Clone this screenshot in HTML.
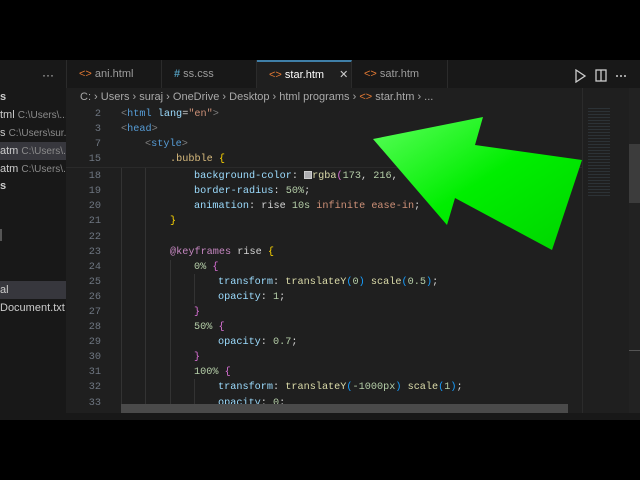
<!DOCTYPE html>
<html><head><meta charset="utf-8"><style>
*{margin:0;padding:0;box-sizing:border-box}
body{width:640px;height:480px;background:#000;overflow:hidden;position:relative;font-family:"Liberation Sans",sans-serif}
.a{position:absolute}
.ed{left:66px;top:88px;width:574px;height:325px;background:#1f1f1f}
.sb{left:0;top:60px;width:66px;height:353px;background:#181818}
.tabs{left:66px;top:60px;width:574px;height:28px;background:#181818}
.tab{position:absolute;top:60px;height:28px;border-right:1px solid #2b2b2b;color:#9d9d9d;font-size:11px;line-height:28px;padding-left:12px;white-space:nowrap}
.code{font-family:"Liberation Mono",monospace;font-size:10.2px;white-space:pre;line-height:15px;color:#d4d4d4}
.ln{position:absolute;left:70px;width:31px;text-align:right;color:#6e7681;font-family:"Liberation Mono",monospace;font-size:10.2px;line-height:15px}
.t{color:#808080}.tg{color:#569cd6}.at{color:#9cdcfe}.s{color:#ce9178}.sel{color:#d7ba7d}.p{color:#9cdcfe}.n{color:#b5cea8}.f{color:#dcdcaa}.k{color:#c586c0}.y{color:#ffd700}.m{color:#da70d6}.b{color:#179fff}
.si{position:absolute;left:0;width:66px;height:18px;font-size:11px;line-height:18px;color:#ccc;white-space:nowrap;overflow:hidden}
.si i{font-style:normal;color:#8b8b8b;font-size:10px}
.g{position:absolute;width:1px;background:#333}
</style></head><body>
<div class="a sb"></div>
<div class="a" style="left:42px;top:68px;color:#ccc;font-size:12px">···</div>
<div class="si" style="top:88px;font-weight:bold;">s</div>
<div class="si" style="top:106px">tml <i>C:\Users\...</i></div>
<div class="si" style="top:124px">s <i>C:\Users\sur...</i></div>
<div class="si" style="top:142px;background:#37373d">atm <i>C:\Users\...</i></div>
<div class="si" style="top:160px">atm <i>C:\Users\...</i></div>
<div class="si" style="top:177px;font-weight:bold">s</div>
<div class="si" style="top:281px;background:#37373d">al</div>
<div class="si" style="top:299px">Document.txt</div>
<div class="a" style="left:0;top:229px;width:2px;height:12px;background:#555"></div>

<div class="a tabs"></div>
<div class="tab" style="left:66px;width:96px;border-left:1px solid #2b2b2b"><span style="color:#e37933">&lt;&gt;</span> ani.html</div>
<div class="tab" style="left:162px;width:95px"><span style="color:#519aba;font-weight:bold">#</span> ss.css</div>
<div class="tab" style="left:257px;width:95px;background:#1f1f1f;color:#fff;border-top:2px solid #3f7fa8;line-height:26px"><span style="color:#e37933">&lt;&gt;</span> star.htm <span style="margin-left:12px;color:#ccc">✕</span></div>
<div class="tab" style="left:352px;width:96px"><span style="color:#e37933">&lt;&gt;</span> satr.htm</div>
<svg class="a" style="left:575px;top:69px" width="60" height="14"><path d="M1 1 L10 7 L1 13 Z" fill="none" stroke="#ccc" stroke-width="1.3"/><rect x="21" y="1" width="10" height="11" fill="none" stroke="#ccc" stroke-width="1.3"/><line x1="26" y1="1" x2="26" y2="12" stroke="#ccc" stroke-width="1.3"/><circle cx="42" cy="7" r="1" fill="#ccc"/><circle cx="46" cy="7" r="1" fill="#ccc"/><circle cx="50" cy="7" r="1" fill="#ccc"/></svg>

<div class="a ed"></div>
<div class="a" style="left:80px;top:91px;font-size:11px;color:#a9a9a9;white-space:nowrap">C: › Users › suraj › OneDrive › Desktop › html programs › <span style="color:#e37933">&lt;&gt;</span> star.htm › ...</div>

<div class="g" style="left:121px;top:167px;height:237px"></div>
<div class="g" style="left:145px;top:167px;height:237px"></div>
<div class="g" style="left:170px;top:260px;height:144px"></div>
<div class="g" style="left:194px;top:274px;height:30px"></div>
<div class="g" style="left:194px;top:379px;height:25px"></div>
<div class="a" style="left:66px;top:167px;width:516px;height:1px;background:#2a2a2a"></div>

<div class="ln" style="top:107px">2</div><div class="a code" style="left:121px;top:107px"><span class="t">&lt;</span><span class="tg">html</span> <span class="at">lang</span>=<span class="s">"en"</span><span class="t">&gt;</span></div>
<div class="ln" style="top:122px">3</div><div class="a code" style="left:121px;top:122px"><span class="t">&lt;</span><span class="tg">head</span><span class="t">&gt;</span></div>
<div class="ln" style="top:137px">7</div><div class="a code" style="left:145px;top:137px"><span class="t">&lt;</span><span class="tg">style</span><span class="t">&gt;</span></div>
<div class="ln" style="top:152px">15</div><div class="a code" style="left:170px;top:152px"><span class="sel">.bubble</span> <span class="y">{</span></div>

<div class="ln" style="top:169px">18</div><div class="a code" style="left:194px;top:169px"><span class="p">background-color</span>: <span style="display:inline-block;width:8px;height:8px;border:1px solid #ccc;background:#adadb0;vertical-align:-1px"></span><span class="f">rgba</span><span class="m">(</span><span class="n">173</span>, <span class="n">216</span>,</div>
<div class="ln" style="top:184px">19</div><div class="a code" style="left:194px;top:184px"><span class="p">border-radius</span>: <span class="n">50%</span>;</div>
<div class="ln" style="top:199px">20</div><div class="a code" style="left:194px;top:199px"><span class="p">animation</span>: rise <span class="n">10s</span> <span class="s">infinite ease-in</span>;</div>
<div class="ln" style="top:214px">21</div><div class="a code" style="left:170px;top:214px"><span class="y">}</span></div>
<div class="ln" style="top:230px">22</div>
<div class="ln" style="top:245px">23</div><div class="a code" style="left:170px;top:245px"><span class="k">@keyframes</span> rise <span class="y">{</span></div>
<div class="ln" style="top:260px">24</div><div class="a code" style="left:194px;top:260px"><span class="n">0%</span> <span class="m">{</span></div>
<div class="ln" style="top:275px">25</div><div class="a code" style="left:218px;top:275px"><span class="p">transform</span>: <span class="f">translateY</span><span class="b">(</span><span class="n">0</span><span class="b">)</span> <span class="f">scale</span><span class="b">(</span><span class="n">0.5</span><span class="b">)</span>;</div>
<div class="ln" style="top:290px">26</div><div class="a code" style="left:218px;top:290px"><span class="p">opacity</span>: <span class="n">1</span>;</div>
<div class="ln" style="top:305px">27</div><div class="a code" style="left:194px;top:305px"><span class="m">}</span></div>
<div class="ln" style="top:320px">28</div><div class="a code" style="left:194px;top:320px"><span class="n">50%</span> <span class="m">{</span></div>
<div class="ln" style="top:335px">29</div><div class="a code" style="left:218px;top:335px"><span class="p">opacity</span>: <span class="n">0.7</span>;</div>
<div class="ln" style="top:350px">30</div><div class="a code" style="left:194px;top:350px"><span class="m">}</span></div>
<div class="ln" style="top:365px">31</div><div class="a code" style="left:194px;top:365px"><span class="n">100%</span> <span class="m">{</span></div>
<div class="ln" style="top:380px">32</div><div class="a code" style="left:218px;top:380px"><span class="p">transform</span>: <span class="f">translateY</span><span class="b">(</span><span class="n">-1000px</span><span class="b">)</span> <span class="f">scale</span><span class="b">(</span><span class="n">1</span><span class="b">)</span>;</div>
<div class="ln" style="top:396px">33</div><div class="a code" style="left:218px;top:396px"><span class="p">opacity</span>: <span class="n">0</span>;</div>

<div class="a" style="left:121px;top:404px;width:447px;height:9px;background:#4a4a4a"></div>
<div class="a" style="left:582px;top:88px;width:1px;height:325px;background:#2b2b2b"></div>
<div class="a" style="left:588px;top:106px;width:22px;height:90px;background:repeating-linear-gradient(#1f1f1f 0 2px,#3d4a52 2px 3px);opacity:.45"></div>
<div class="a" style="left:629px;top:88px;width:11px;height:325px;background:#222"></div>
<div class="a" style="left:629px;top:144px;width:11px;height:59px;background:#3c3c3c"></div>
<div class="a" style="left:629px;top:350px;width:11px;height:1px;background:#555"></div>
<div class="a" style="left:0;top:413px;width:640px;height:7px;background:#181818"></div>

<svg class="a" style="left:0;top:0" width="640" height="480">
<defs><linearGradient id="gr" x1="0" y1="0" x2="1" y2="1"><stop offset="0" stop-color="#5cff5c"/><stop offset="0.5" stop-color="#00ee00"/><stop offset="1" stop-color="#00d400"/></linearGradient></defs>
<polygon points="373,139 483,117 475,145 582,160 552,250 455,198 447,225" fill="url(#gr)"/>
</svg>
</body></html>
